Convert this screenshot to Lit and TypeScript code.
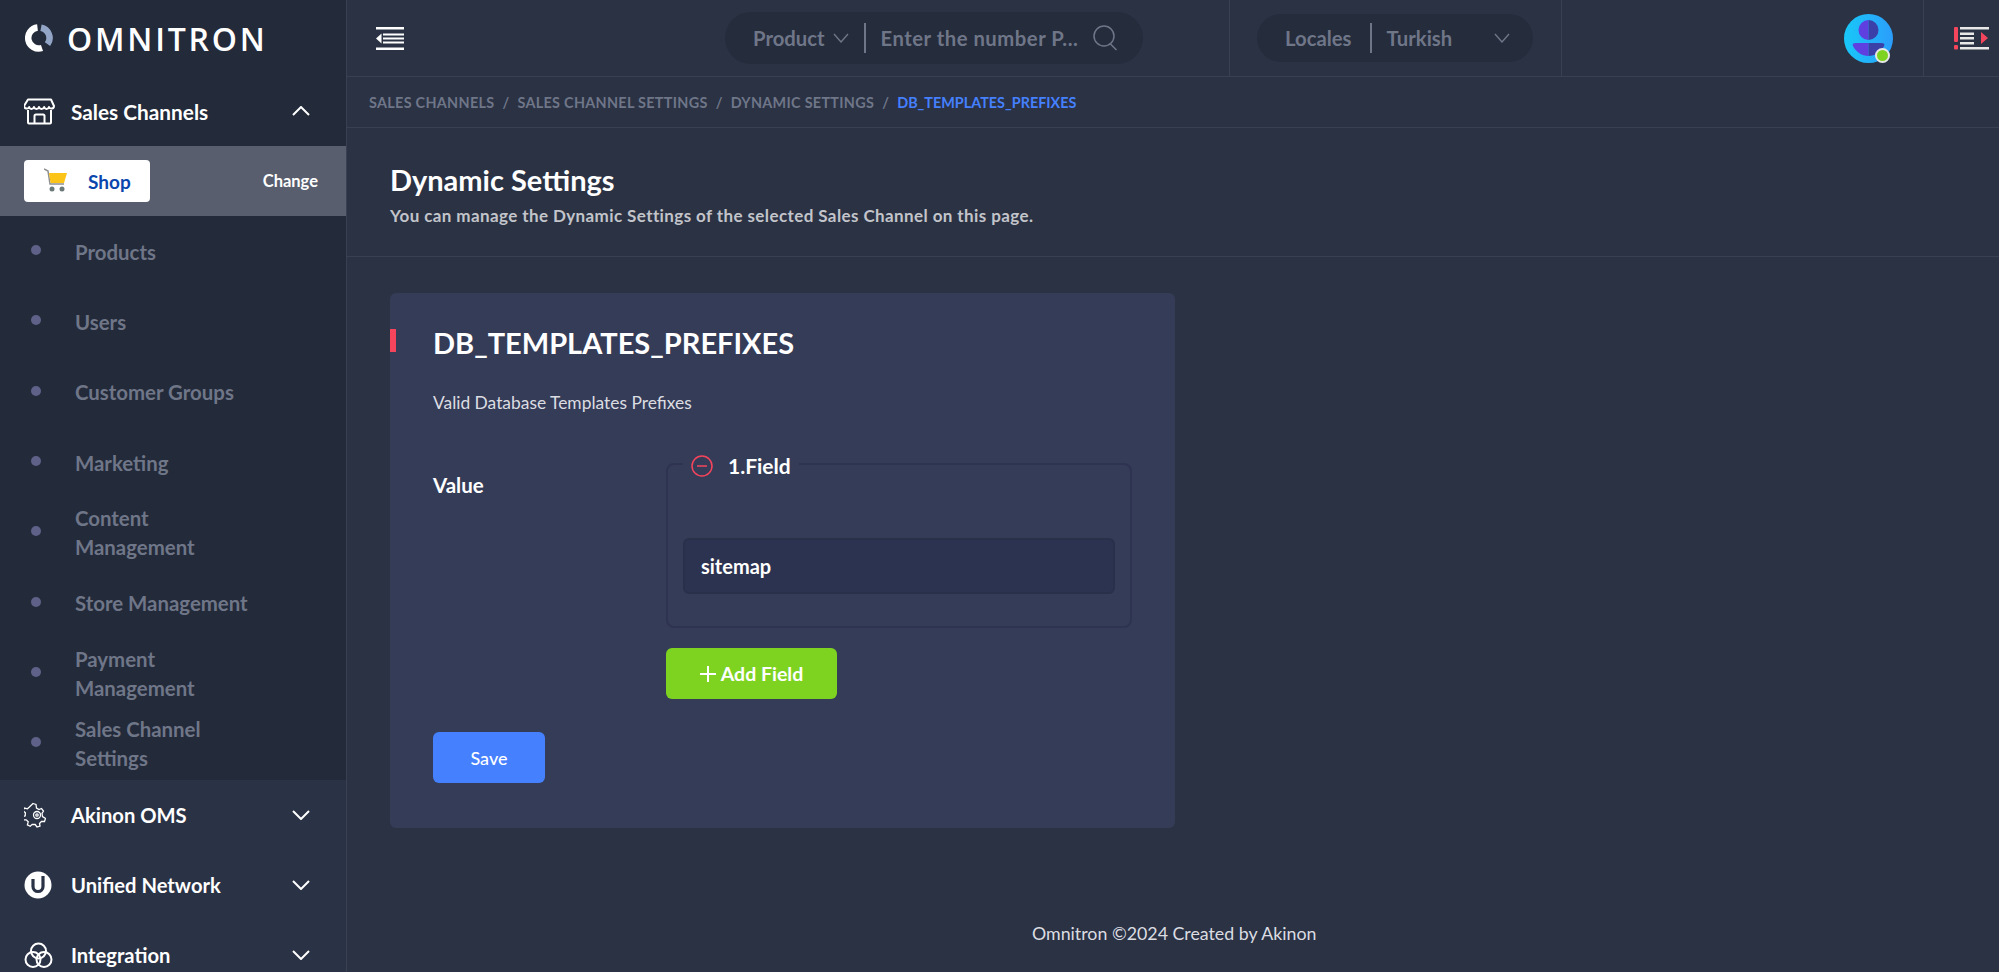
import { LitElement, html, css } from 'lit';
import { customElement } from 'lit/decorators.js';

const subItems = [
  ['Products'],
  ['Users'],
  ['Customer Groups'],
  ['Marketing'],
  ['Content', 'Management'],
  ['Store Management'],
  ['Payment', 'Management'],
  ['Sales Channel', 'Settings'],
];

const crumbs = ['Sales Channels', 'Sales Channel Settings', 'Dynamic Settings'];

const chevronDown = html`<svg class="chev" viewBox="0 0 18 10"><path d="M1 1l8 8 8-8" fill="none" stroke="#fff" stroke-width="2"/></svg>`;
const chevronUp = html`<svg class="chev" viewBox="0 0 18 10"><path d="M1 9l8-8 8 8" fill="none" stroke="#fff" stroke-width="2"/></svg>`;
const thinChevron = html`<svg class="thin" viewBox="0 0 16 10"><path d="M1 1l7 8 7-8" fill="none" stroke="#6f7688" stroke-width="1.4"/></svg>`;

const storeIcon = html`<svg width="31" height="27" viewBox="0 0 31 27" fill="none" stroke="#fff" stroke-width="2" stroke-linejoin="round">
  <path d="M4 1.5h23l3 6.5c0 3-4 3.500-5 1-1 2.500-4 2.500-4.800 0-1 2.500-4.400 2.500-5.200 0-.8 2.500-4.200 2.500-5 0-1 2.500-4.500 2.500-4.800 0-1 2.500-4.700 2-5.200-1z"/>
  <path d="M4 12v12.500a1 1 0 0 0 1 1h21a1 1 0 0 0 1-1V12"/>
  <path d="M10.500 25.500V18a1.500 1.500 0 0 1 1.500-1.500h7a1.500 1.500 0 0 1 1.500 1.500v7.500"/>
</svg>`;

const gearIcon = html`<svg width="22" height="26" viewBox="0 0 22 26" fill="none" stroke="#fff" stroke-width="1.300">
  <path d="M9 1.500l3 1 .5 3.500 2.500 1.500 2.500-1 2 2.500-1.500 2.500.5 3 3 2-1 3-3-.2-2 2.200.5 2.500-3 1-1.800-2.500-3-.2-2 2-2.800-1.500.8-3-2-2-3 .2-.8-3 2.800-1.200.2-3-2.500-2 1.500-2.800 3 .8 2-1.800z"/>
  <circle cx="13" cy="13" r="3.500"/><circle cx="13" cy="13" r="1.200"/>
</svg>`;

const unifiedIcon = html`<svg width="28" height="28" viewBox="0 0 28 28">
  <circle cx="14" cy="14" r="13.500" fill="#fff"/>
  <path d="M9 8v7.500a5 5 0 0 0 10 0V5" fill="none" stroke="#2a3245" stroke-width="3.200"/>
</svg>`;

const integrationIcon = html`<svg width="29" height="26" viewBox="0 0 29 26" fill="none" stroke="#fff" stroke-width="2">
  <circle cx="14.500" cy="9" r="7.500"/><circle cx="9" cy="17.500" r="7.500"/><circle cx="20" cy="17.500" r="7.500"/>
</svg>`;

@customElement('app-root')
export class AppRoot extends LitElement {
  static styles = css`
    :host {
      display: flex;
      width: 100%;
      height: 100vh;
      overflow: hidden;
      background: #2a3244;
      font-family: Lato, 'Liberation Sans', sans-serif;
      color: #fff;
    }
    svg { display: block; flex: none; }

    .sidebar {
      width: 346px;
      flex: none;
      display: flex;
      flex-direction: column;
      background: #232a3a;
      border-right: 1px solid #384052;
      box-sizing: content-box;
    }
    .logo {
      height: 76px;
      flex: none;
      display: flex;
      align-items: center;
      gap: 14px;
      padding-left: 25px;
      font-family: 'Open Sans', Lato, sans-serif;
      font-size: 32px;
      font-weight: 600;
      letter-spacing: 2.800px;
    }
    .group {
      height: 70px;
      flex: none;
      display: flex;
      align-items: center;
      padding: 0 36px 0 24px;
      font-size: 20.200px;
      font-weight: 700;
    }
    .group .ico { width: 47px; display: flex; }
    .group .label { flex: 1; }
    .group.open { font-size: 20.800px; }
    .chev { width: 18px; height: 10px; }

    .shop-band {
      height: 70px;
      flex: none;
      display: flex;
      align-items: center;
      justify-content: space-between;
      padding: 0 28px 0 24px;
      background: #585e6e;
      font-size: 16.500px;
      font-weight: 700;
    }
    .shop {
      width: 126px;
      height: 42px;
      display: flex;
      align-items: center;
      gap: 21px;
      padding-left: 20px;
      box-sizing: border-box;
      background: #fff;
      border-radius: 4px;
      color: #0b46ad;
      font-size: 19px;
    }
    .sub { height: 564px; flex: none; padding-top: 1px; box-sizing: border-box; }
    .sub-item {
      height: 70.300px;
      display: flex;
      align-items: center;
      gap: 34px;
      padding-left: 31px;
      color: #6f7688;
      font-size: 20.400px;
      font-weight: 700;
      line-height: 29px;
    }
    .dot {
      width: 10px;
      height: 10px;
      flex: none;
      margin-top: -4px;
      border-radius: 50%;
      background: #5f6188;
    }
    .lower { flex: 1; background: #2a3245; }

    .main { flex: 1; min-width: 0; display: flex; flex-direction: column; }
    .topbar {
      height: 76px;
      flex: none;
      display: flex;
      align-items: center;
      border-bottom: 1px solid #384052;
      box-sizing: content-box;
    }
    .collapse { width: 378px; padding-left: 29px; box-sizing: border-box; }
    .pill {
      display: flex;
      align-items: center;
      background: #252c3c;
      border-radius: 26px;
      color: #6f7688;
      font-size: 20.300px;
      font-weight: 700;
      white-space: nowrap;
    }
    .pill i { width: 2px; height: 30px; background: #6f7688; }
    .thin { width: 16px; height: 10px; }
    .search { width: 418px; height: 52px; padding-left: 28px; box-sizing: border-box; }
    .search i { margin: 0 15px 0 15px; }
    .search .thin { margin-left: 8px; }
    .search .query { letter-spacing: .5px; }
    .search svg.glass { margin-left: 15px; }
    .cell {
      height: 76px;
      display: flex;
      align-items: center;
      border-left: 1px solid #384052;
      box-sizing: border-box;
    }
    .locale-cell { width: 332px; margin-left: 86px; padding-left: 27px; }
    .locale { width: 276px; height: 48px; padding-left: 28px; box-sizing: border-box; }
    .locale i { margin: 0 15px 0 18px; }
    .locale .thin { margin-left: 42px; }
    .user-cell { width: 362px; position: relative; justify-content: flex-end; padding-right: 30px; }
    .avatar { position: relative; width: 49px; height: 49px; }
    .status {
      position: absolute;
      right: 3px;
      bottom: 0;
      width: 11px;
      height: 11px;
      border: 2px solid #e6e8e6;
      border-radius: 50%;
      background: #7ed321;
    }
    .notif-cell { width: 76px; padding-left: 30px; flex: none; }

    .crumbs {
      height: 50px;
      flex: none;
      display: flex;
      align-items: center;
      gap: 8px;
      padding-left: 22px;
      border-bottom: 1px solid #384052;
      color: #6f7688;
      font-size: 14.400px;
      font-weight: 700;
      text-transform: uppercase;
      letter-spacing: .3px;
    }
    .crumbs .current { color: #4580ff; letter-spacing: 0; }

    .heading {
      height: 129px;
      flex: none;
      padding: 35px 0 0 43px;
      box-sizing: border-box;
      border-bottom: 1px solid #384052;
    }
    .heading h1 { margin: 0; font-size: 29px; font-weight: 700; line-height: 34px; }
    .heading p { margin: 8px 0 0; color: #c2c4ca; font-size: 17px; font-weight: 700; line-height: 22px; letter-spacing: .4px; }

    .content { flex: 1; padding: 36px 0 0 43px; }
    .card {
      position: relative;
      width: 785px;
      height: 535px;
      box-sizing: border-box;
      padding: 32px 0 0 43px;
      background: #353c57;
      border-radius: 6px;
    }
    .mark { position: absolute; left: 0; top: 36px; width: 6px; height: 23px; background: #f5455c; }
    .card h2 { margin: 0; font-size: 29px; font-weight: 700; line-height: 36px; }
    .desc { margin: 31px 0 0; color: #dcdde2; font-size: 17.400px; font-weight: 400; line-height: 22px; }
    .row { display: flex; margin-top: 36px; }
    .row .name { width: 233px; padding-top: 23px; font-size: 20.500px; font-weight: 700; line-height: 24px; }
    .fieldset {
      width: 466px;
      height: 178px;
      margin: 0;
      padding: 0 15px;
      box-sizing: border-box;
      border: 2px solid #2d3350;
      border-radius: 8px;
    }
    legend {
      display: flex;
      align-items: center;
      gap: 15px;
      margin-left: 0;
      padding: 4px 8px 0;
      font-size: 21px;
      font-weight: 700;
      line-height: 24px;
    }
    .input {
      height: 56px;
      margin-top: 60px;
      padding-left: 16px;
      display: flex;
      align-items: center;
      box-sizing: border-box;
      background: #2c3350;
      border: 2px solid #293049;
      border-radius: 6px;
      font-size: 20px;
      font-weight: 700;
    }
    button {
      display: flex;
      align-items: center;
      justify-content: center;
      border: 0;
      border-radius: 6px;
      color: #fff;
      font-family: inherit;
      font-weight: 700;
    }
    .add { gap: 5px; width: 171px; height: 51px; margin: 20px 0 0 233px; background: #7ed321; font-size: 19.500px; }
    .save { width: 112px; height: 51px; margin-top: 33px; background: #4580ff; font-size: 18px; font-weight: 500; }

    footer {
      height: 78px;
      flex: none;
      padding-left: 685px;
      color: #dcdde2;
      font-size: 17.800px;
      line-height: 78px;
    }
  `;

  render() {
    return html`
      <aside class="sidebar">
        <div class="logo">
          <svg width="28" height="28" viewBox="0 0 28 28" fill="none" stroke-width="6.500">
            <path d="M12.500 3.600A10.500 10.500 0 1 0 17 24" stroke="#fff"/>
            <path d="M16 3.700A10.500 10.500 0 0 1 22.500 20.200" stroke="#93a5c6"/>
          </svg>
          <span>OMNITRON</span>
        </div>
        <div class="group open"><span class="ico">${storeIcon}</span><span class="label">Sales Channels</span>${chevronUp}</div>
        <div class="shop-band">
          <div class="shop">
            <svg width="23" height="26" viewBox="0 0 23 26">
              <path d="M0 1l4 2 2 13h14" fill="none" stroke="#8f8f8f" stroke-width="1.500"/>
              <path d="M5 5h18l-3 10H6.500z" fill="#fcc419"/>
              <circle cx="8" cy="21" r="2.500" fill="#6b7a78"/><circle cx="18" cy="21" r="2.500" fill="#6b7a78"/>
            </svg>
            <span>Shop</span>
          </div>
          <span>Change</span>
        </div>
        <div class="sub">
          ${subItems.map(lines => html`
            <div class="sub-item">
              <span class="dot"></span>
              <span>${lines.map(l => html`<div>${l}</div>`)}</span>
            </div>
          `)}
        </div>
        <div class="lower">
          <div class="group"><span class="ico">${gearIcon}</span><span class="label">Akinon OMS</span>${chevronDown}</div>
          <div class="group"><span class="ico">${unifiedIcon}</span><span class="label">Unified Network</span>${chevronDown}</div>
          <div class="group"><span class="ico">${integrationIcon}</span><span class="label">Integration</span>${chevronDown}</div>
        </div>
      </aside>
      <div class="main">
        <header class="topbar">
          <div class="collapse">
            <svg width="28" height="23" viewBox="0 0 28 23" fill="#fff">
              <rect width="28" height="2.500"/><rect x="7" y="6.500" width="21" height="2"/><rect x="7" y="10.500" width="21" height="2"/><rect x="7" y="14.500" width="21" height="2"/><rect y="20.500" width="28" height="2.500"/>
              <path d="M5.500 6.500v10L0 11.500z"/>
            </svg>
          </div>
          <div class="pill search">
            <span>Product</span>${thinChevron}<i></i><span class="query">Enter the number P...</span>
            <svg class="glass" width="25" height="26" viewBox="0 0 25 26" fill="none" stroke="#6f7688" stroke-width="1.500">
              <circle cx="11" cy="11" r="10"/><path d="M17.500 19l6 6"/>
            </svg>
          </div>
          <div class="cell locale-cell">
            <div class="pill locale"><span>Locales</span><i></i><span>Turkish</span>${thinChevron}</div>
          </div>
          <div class="cell user-cell">
            <div class="avatar">
              <svg width="49" height="49" viewBox="0 0 49 49">
                <defs><linearGradient id="sky" x1="0" x2="1" y1="0" y2="0"><stop offset="0" stop-color="#18c8f8"/><stop offset="1" stop-color="#2c9dfb"/></linearGradient></defs>
                <circle cx="24.500" cy="24.500" r="24.500" fill="url(#sky)"/>
                <path d="M24.500 6a10 10 0 0 0 0 20z" fill="#5f3fe0"/>
                <path d="M24.500 6a10 10 0 0 1 0 20z" fill="#3b3fa8"/>
                <path d="M24.500 29H12c-3 0-4 1-3 3 3 6 9 10 15.500 10z" fill="#5f3fe0"/>
                <path d="M24.500 29H37c3 0 4 1 3 3-3 6-9 10-15.500 10z" fill="#3b3fa8"/>
              </svg>
              <span class="status"></span>
            </div>
          </div>
          <div class="cell notif-cell">
            <svg width="35" height="23" viewBox="0 0 35 23">
              <rect x="0" y="0" width="4" height="15" rx="1" fill="#f5455c"/><rect x="0" y="18" width="4" height="4.500" rx="1" fill="#f5455c"/>
              <g fill="#e8e8e8"><rect x="6" width="29" height="2.500"/><rect x="6" y="5.500" width="14" height="2.500"/><rect x="6" y="10" width="14" height="2.500"/><rect x="6" y="15" width="14" height="2.500"/><rect x="6" y="20" width="29" height="2.500"/></g>
              <path d="M27 5v12l7-6z" fill="#f5455c"/>
            </svg>
          </div>
        </header>
        <nav class="crumbs">
          ${crumbs.map(c => html`<span>${c}</span><span>/</span>`)}
          <span class="current">DB_TEMPLATES_PREFIXES</span>
        </nav>
        <section class="heading">
          <h1>Dynamic Settings</h1>
          <p>You can manage the Dynamic Settings of the selected Sales Channel on this page.</p>
        </section>
        <section class="content">
          <div class="card">
            <span class="mark"></span>
            <h2>DB_TEMPLATES_PREFIXES</h2>
            <p class="desc">Valid Database Templates Prefixes</p>
            <div class="row">
              <div class="name">Value</div>
              <fieldset class="fieldset">
                <legend>
                  <svg width="22" height="22" viewBox="0 0 22 22" fill="none" stroke="#f5455c" stroke-width="1.500">
                    <circle cx="11" cy="11" r="10"/><path d="M6 11h10"/>
                  </svg>
                  1.Field
                </legend>
                <div class="input">sitemap</div>
              </fieldset>
            </div>
            <button class="add">
              <svg width="16" height="16" viewBox="0 0 16 16"><path d="M8 0v16M0 8h16" stroke="#fff" stroke-width="2"/></svg>
              Add Field
            </button>
            <button class="save">Save</button>
          </div>
        </section>
        <footer>Omnitron ©2024 Created by Akinon</footer>
      </div>
    `;
  }
}
